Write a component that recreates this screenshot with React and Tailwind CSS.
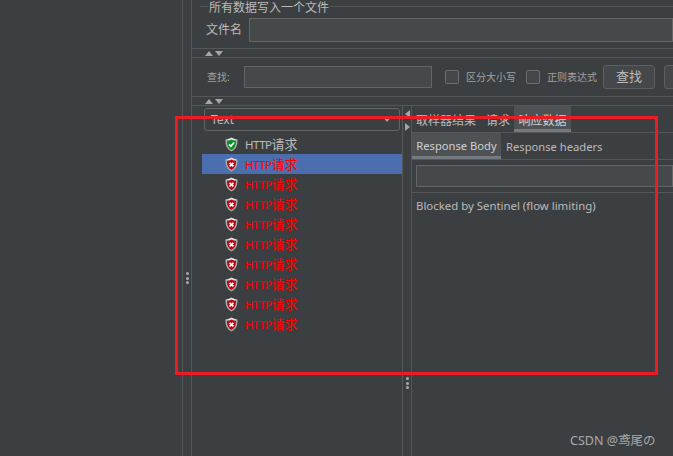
import React from "react";

const FONT = "font-['Noto_Sans','Noto_Sans_CJK_SC',sans-serif]";

const Grip = () => (
  <div className="flex flex-col items-center gap-[1.5px]">
    <span className="w-[3px] h-[3px] rounded-full bg-[#a9abac]" />
    <span className="w-[3px] h-[3px] rounded-full bg-[#a9abac]" />
    <span className="w-[3px] h-[3px] rounded-full bg-[#a9abac]" />
  </div>
);

const SplitArrows = () => (
  <div className="h-[8px] flex items-center gap-[2px] pl-[13px] border-y border-[#555759] box-content shrink-0">
    <svg width="8" height="5" viewBox="0 0 8 5"><path d="M4 0 L8 5 L0 5 Z" fill="#a4a6a7" /></svg>
    <svg width="8" height="5" viewBox="0 0 8 5"><path d="M0 0 L8 0 L4 5 Z" fill="#a4a6a7" /></svg>
  </div>
);

const Shield = ({ ok }) => (
  <svg width="13" height="15" viewBox="0 0 14 16" className="shrink-0">
    <path d="M7 .5 C9 1.8 11 2.4 13.5 2.5 C13.8 8.5 12 13 7 15.5 C2 13 .2 8.5 .5 2.5 C3 2.4 5 1.8 7 .5 Z" fill="#a8aaaa" />
    <path d="M7 .8 C5 1.9 3 2.5 1 2.8 L7 4 L13 2.8 C11 2.5 9 1.9 7 .8 Z" fill="#e2e3e3" />
    <path d="M7 2.6 C8.6 3.4 10.2 3.9 11.9 4.1 C12 8.5 10.6 11.8 7 13.8 C3.4 11.8 2 8.5 2.1 4.1 C3.8 3.9 5.4 3.4 7 2.6 Z" fill={ok ? "#0b8f26" : "#b70c16"} />
    {ok ? (
      <path d="M4.4 7.9 L6.3 9.9 L9.8 5.9" fill="none" stroke="#ffffff" strokeWidth="1.8" />
    ) : (
      <path d="M4.9 6.2 L9.1 10 M9.1 6.2 L4.9 10" fill="none" stroke="#ffffff" strokeWidth="1.8" />
    )}
  </svg>
);

const ResultRow = ({ ok, selected }) => (
  <div className={`h-[20px] flex items-center gap-[7px] pl-[23px] ${selected ? "bg-[#4b6eaf]" : ""} ${ok ? "text-[#bbbbbb]" : "text-[#ff0000]"}`}>
    <Shield ok={ok} />
    <span className="whitespace-nowrap -mt-[2px]">
      <span className="text-[11.5px] tracking-[-0.5px]">HTTP</span>
      <span className="text-[13px]">请求</span>
    </span>
  </div>
);

const Checkbox = ({ label }) => (
  <div className="flex items-center gap-[7px] shrink-0">
    <span className="w-[14px] h-[14px] rounded-[2px] border border-[#6b6e70] bg-[#43474a]" />
    <span className="text-[10px] text-[#a0a2a3] whitespace-nowrap">{label}</span>
  </div>
);

export default function App() {
  const rows = [false, false, false, false, false, false, false, false];

  return (
    <div className={`${FONT} relative w-[673px] h-[456px] overflow-hidden flex bg-[#3c3f41] text-[#bbbbbb]`}>
      <div className="w-[183px] shrink-0 border-r border-[#555759]" />
      <div className="w-[9px] shrink-0 border-r border-[#555759] pt-[272px] flex justify-center">
        <div><Grip /></div>
      </div>

      <div className="flex-1 min-w-0 flex flex-col">
        {/* write to file group */}
        <div className="h-[48px] pl-[8px] shrink-0">
          <div className="h-[13px] flex items-start">
            <div className="w-[8px] h-px mt-[6px] bg-[#555759]" />
            <span className="block px-[1px] mt-[1px] text-[12px] leading-[13px] whitespace-nowrap">所有数据写入一个文件</span>
            <div className="flex-1 h-px mt-[6px] bg-[#555759]" />
          </div>
          <div className="flex items-center mt-[5px] pl-[6px] gap-[7px]">
            <span className="text-[12px] w-[36px] shrink-0">文件名</span>
            <div className="flex-1 h-[24px] bg-[#45494a] border border-[#646464]" />
          </div>
        </div>

        <SplitArrows />

        {/* search row */}
        <div className="h-[38px] flex items-center pl-[15px] shrink-0">
          <span className="text-[10px] text-[#a0a2a3] w-[37px] shrink-0">查找:</span>
          <div className="w-[188px] h-[22px] shrink-0 bg-[#45494a] border border-[#646464] mr-[13px]" />
          <Checkbox label="区分大小写" />
          <div className="w-[10px] shrink-0" />
          <Checkbox label="正则表达式" />
          <div className="w-[6px] shrink-0" />
          <div className="w-[52px] h-[24px] shrink-0 rounded-[3px] border border-[#5e6060] bg-[#44484a] flex items-center justify-center text-[13px]">查找</div>
          <div className="w-[9px] shrink-0" />
          <div className="w-[40px] h-[24px] shrink-0 rounded-[3px] border border-[#5e6060] bg-[#44484a]" />
        </div>

        <SplitArrows />

        <div className="flex-1 flex min-h-0">
          {/* sampler tree */}
          <div className="w-[211px] shrink-0 border-r border-[#555759] overflow-hidden">
            <div className="h-[23px] mt-[2px] ml-[12px] mr-[2px] rounded-[3px] border border-[#646464] flex items-center justify-between pl-[6px] pr-[8px] text-[12px]">
              <span>Text</span>
              <svg width="8" height="5" viewBox="0 0 8 5"><path d="M0 0 L8 0 L4 5 Z" fill="#a4a6a7" /></svg>
            </div>
            <div className="mt-[3px] ml-[10px]">
              <ResultRow ok />
              <ResultRow selected />
              {rows.map((_, i) => (
                <ResultRow key={i} />
              ))}
            </div>
          </div>

          <div className="w-[9px] shrink-0 border-r border-[#555759] flex flex-col items-center">
            <svg width="5" height="8" viewBox="0 0 5 8" className="mt-[4px]"><path d="M5 0 L5 8 L0 4 Z" fill="#a4a6a7" /></svg>
            <svg width="5" height="8" viewBox="0 0 5 8" className="mt-[5px]"><path d="M0 0 L5 4 L0 8 Z" fill="#a4a6a7" /></svg>
            <div className="mt-[246px]"><Grip /></div>
          </div>

          {/* response panel */}
          <div className="flex-1 min-w-0 flex flex-col">
            <div className="h-[27px] shrink-0 flex border-b border-[#555759] text-[12px] pl-[4px]">
              <span className="flex items-center pt-[4px]">取样器结果</span>
              <span className="flex items-center pt-[4px] ml-[10px]">请求</span>
              <span className="flex items-center justify-center pt-[6px] ml-[4px] w-[57px] bg-[#4e5254] border-b-[3px] border-[#747a80] text-[#d4d4d4]">响应数据</span>
            </div>
            <div className="h-[27px] shrink-0 flex border-b border-[#555759] text-[11.2px]">
              <span className="w-[89px] flex items-center justify-center pt-[4px] bg-[#4e5254] border-b-[3px] border-[#747a80] text-[#d0d0d0] whitespace-nowrap">Response Body</span>
              <span className="flex items-center pt-[2px] ml-[5px] whitespace-nowrap">Response headers</span>
            </div>
            <div className="h-[33px] shrink-0 pt-[5px] pl-[4px] border-b border-[#555759]">
              <div className="h-[22px] bg-[#45494a] border border-[#646464]" />
            </div>
            <div className="pl-[4px] mt-[4px] text-[11.4px] leading-[18px] whitespace-nowrap">Blocked by Sentinel (flow limiting)</div>
          </div>
        </div>
      </div>

      {/* annotation frame and watermark lie over the page */}
      <div className="absolute left-[175px] top-[116px] w-[483px] h-[259px] border-[3px] border-[#ed1c24]" />
      <span className="absolute left-[570px] top-[432px] text-[12.5px] text-[#a9aaab]">CSDN @鸢尾の</span>
    </div>
  );
}
